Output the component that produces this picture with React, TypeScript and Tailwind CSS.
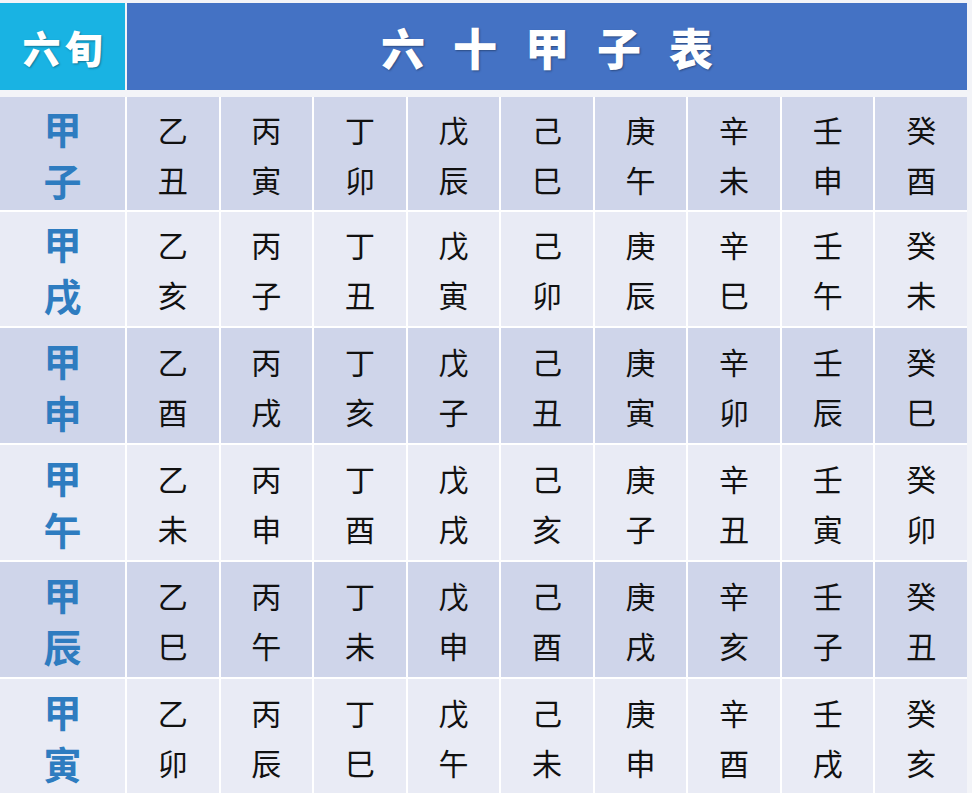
const rows: { head: [string, string]; cells: [string, string][] }[] = [
  { head: ["甲", "子"], cells: [["乙", "丑"], ["丙", "寅"], ["丁", "卯"], ["戊", "辰"], ["己", "巳"], ["庚", "午"], ["辛", "未"], ["壬", "申"], ["癸", "酉"]] },
  { head: ["甲", "戌"], cells: [["乙", "亥"], ["丙", "子"], ["丁", "丑"], ["戊", "寅"], ["己", "卯"], ["庚", "辰"], ["辛", "巳"], ["壬", "午"], ["癸", "未"]] },
  { head: ["甲", "申"], cells: [["乙", "酉"], ["丙", "戌"], ["丁", "亥"], ["戊", "子"], ["己", "丑"], ["庚", "寅"], ["辛", "卯"], ["壬", "辰"], ["癸", "巳"]] },
  { head: ["甲", "午"], cells: [["乙", "未"], ["丙", "申"], ["丁", "酉"], ["戊", "戌"], ["己", "亥"], ["庚", "子"], ["辛", "丑"], ["壬", "寅"], ["癸", "卯"]] },
  { head: ["甲", "辰"], cells: [["乙", "巳"], ["丙", "午"], ["丁", "未"], ["戊", "申"], ["己", "酉"], ["庚", "戌"], ["辛", "亥"], ["壬", "子"], ["癸", "丑"]] },
  { head: ["甲", "寅"], cells: [["乙", "卯"], ["丙", "辰"], ["丁", "巳"], ["戊", "午"], ["己", "未"], ["庚", "申"], ["辛", "酉"], ["壬", "戌"], ["癸", "亥"]] },
];

export default function App() {
  return (
    <div
      className="h-[793px] w-[972px] overflow-hidden bg-[#f3f4f8] pt-[3px] pr-[5px]"
      style={{ fontFamily: '"Noto Sans CJK SC", sans-serif' }}
    >
      {/* header */}
      <div className="flex h-[87px] gap-[2px]">
        <div className="flex w-[125px] items-center justify-center bg-[#19b3e3] pl-[4px] text-[38px] font-black tracking-[4px] text-white [text-shadow:1px_1px_2px_rgba(0,0,0,0.35)]">
          六旬
        </div>
        <div className="flex flex-1 items-center justify-center bg-[#4472c4] pl-[28px] text-[44px] font-black tracking-[28px] text-white [text-shadow:1px_1px_2px_rgba(0,0,0,0.35)]">
          六十甲子表
        </div>
      </div>

      {/* body */}
      <div className="mt-[7px] grid grid-cols-[125px_repeat(9,1fr)] grid-rows-[113px_114px_115px_115px_115px_115px] gap-[2px] bg-white">
        {rows.map((row, i) => {
          const bg = i % 2 === 0 ? "bg-[#cfd5ea]" : "bg-[#e9ebf5]";
          return [
            <div
              key={`h${i}`}
              className={`${bg} flex flex-col items-center justify-center text-[38px] font-bold leading-[52px] text-[#2e7cc0]`}
            >
              <span>{row.head[0]}</span>
              <span>{row.head[1]}</span>
            </div>,
            ...row.cells.map((c, j) => (
              <div
                key={`c${i}-${j}`}
                className={`${bg} flex flex-col items-center justify-center text-[30px] leading-[50px] text-[#111111]`}
              >
                <span>{c[0]}</span>
                <span>{c[1]}</span>
              </div>
            )),
          ];
        })}
      </div>
    </div>
  );
}
